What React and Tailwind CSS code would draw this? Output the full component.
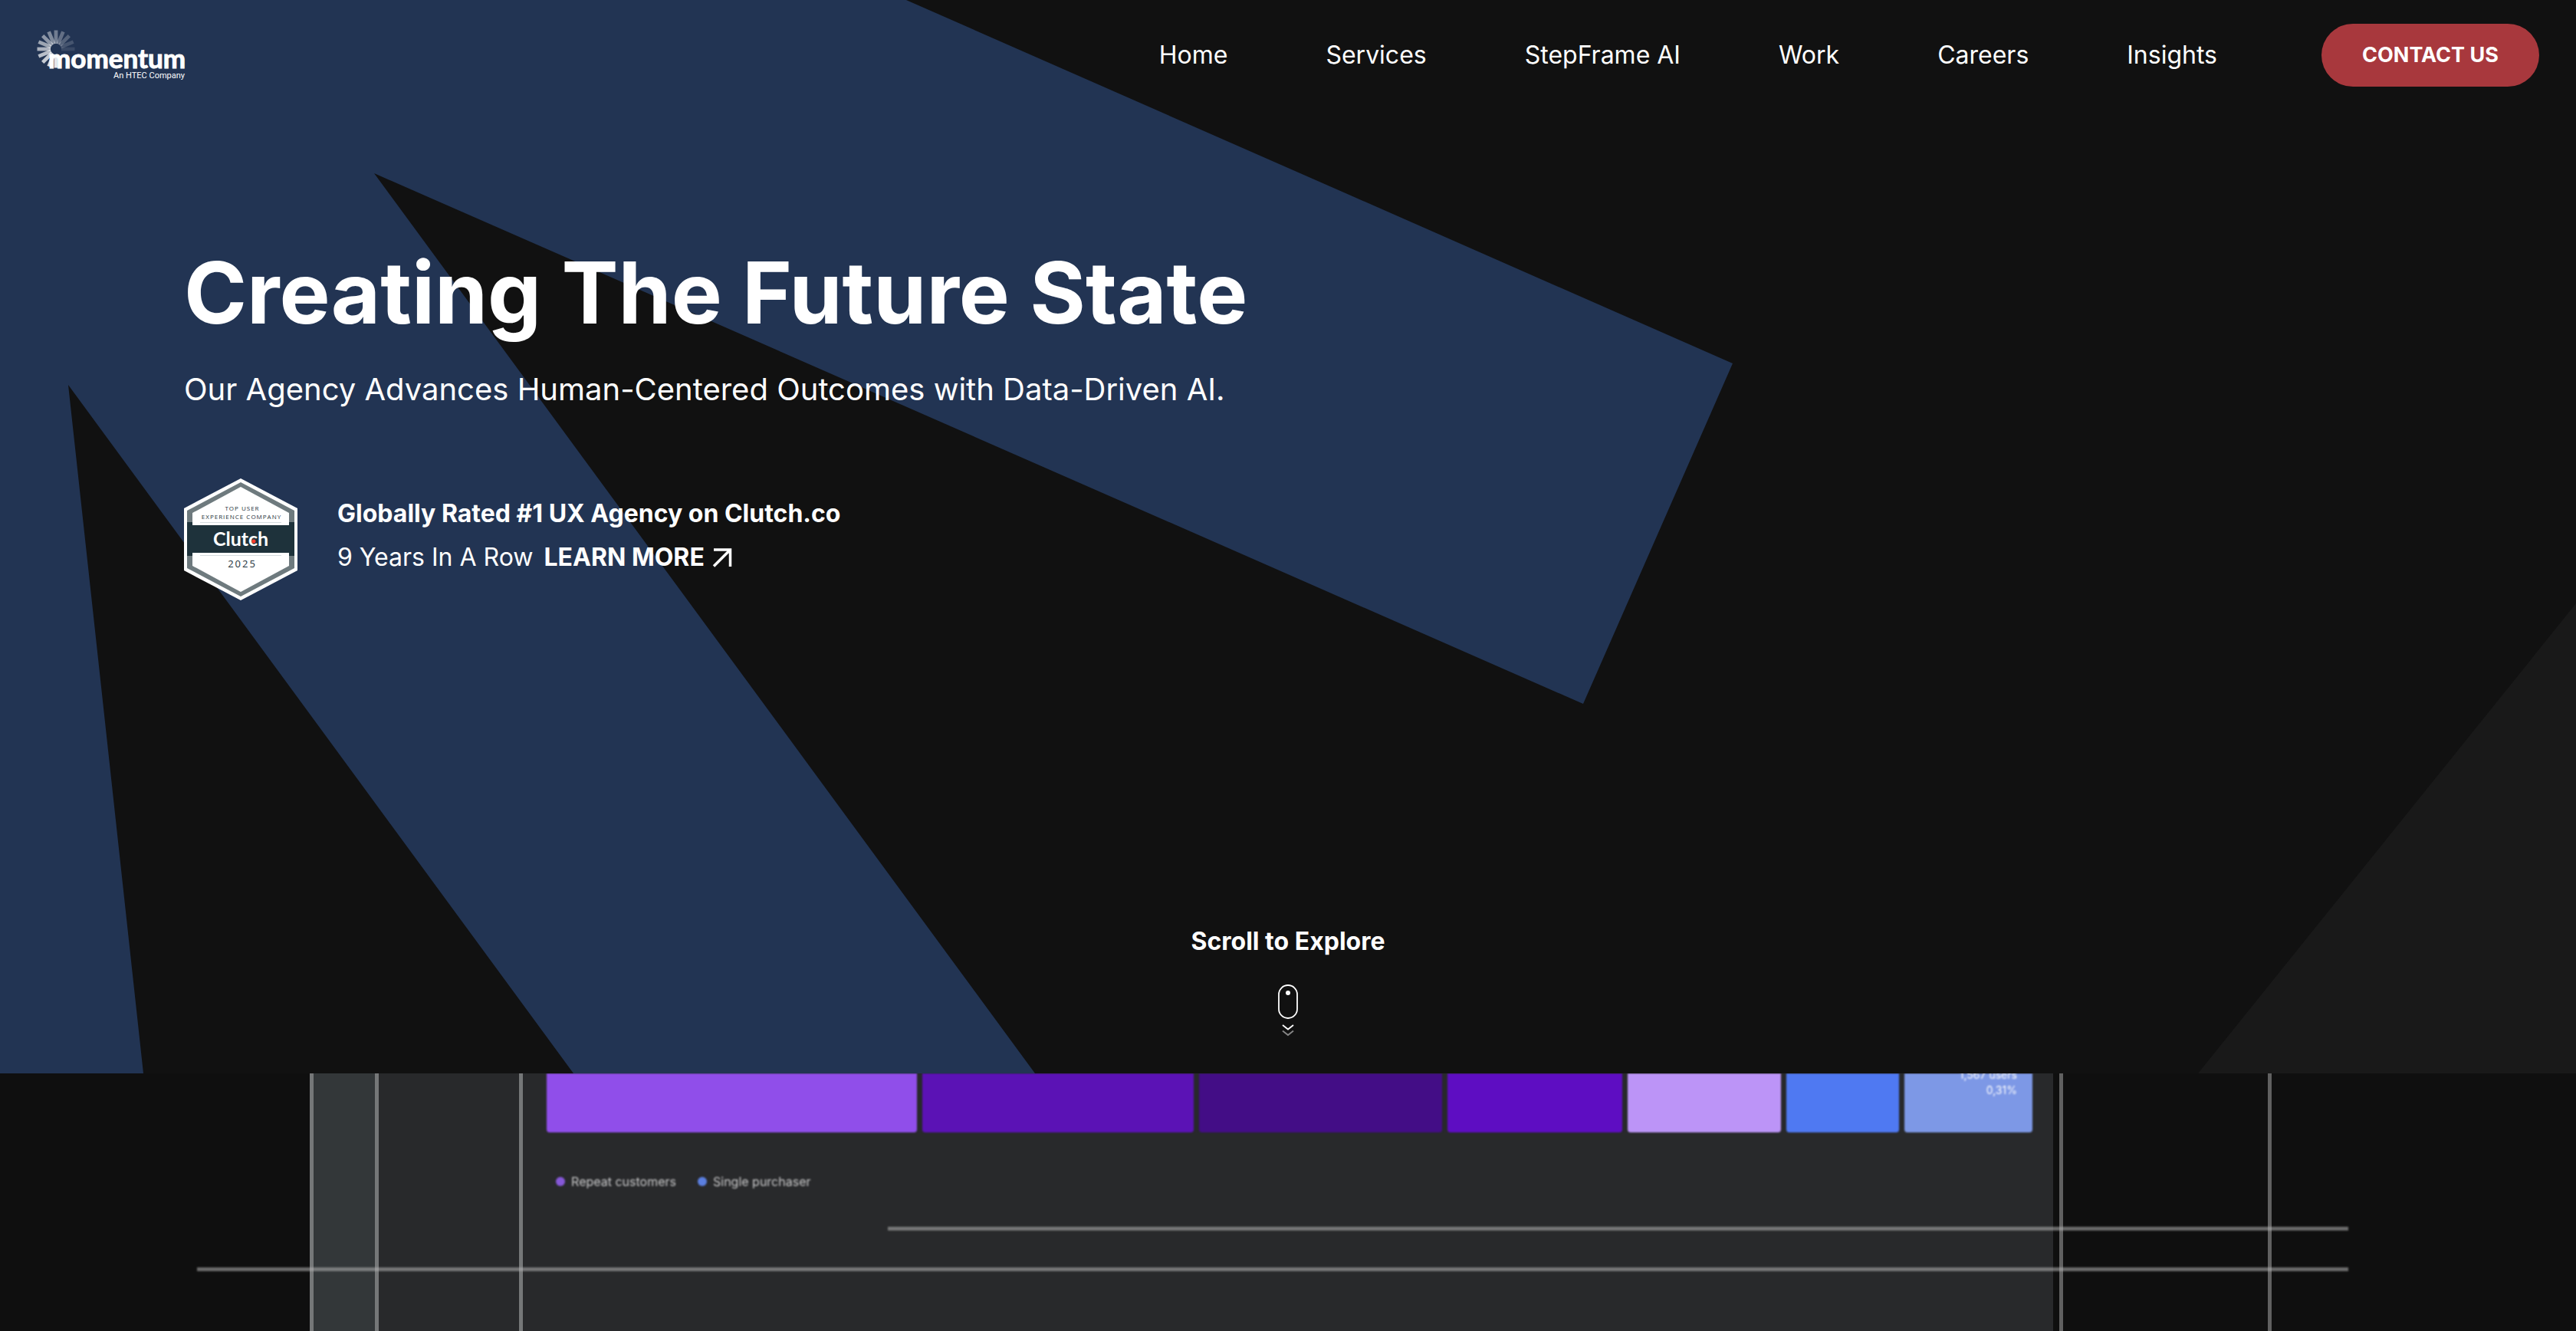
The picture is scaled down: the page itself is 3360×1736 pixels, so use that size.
const navItems = ['Home', 'Services', 'StepFrame AI', 'Work', 'Careers', 'Insights'];

const tiles = [
  { color: 'bg-[#904eea]', grow: 'grow-[483]' },
  { color: 'bg-[#5b12b5]', grow: 'grow-[354]' },
  { color: 'bg-[#430d86]', grow: 'grow-[316]' },
  { color: 'bg-[#5e0dc2]', grow: 'grow-[228]' },
  { color: 'bg-[#bc94f7]', grow: 'grow-[200]' },
  { color: 'bg-[#4f79f2]', grow: 'grow-[147]' },
  { color: 'bg-[#7d98e6]', grow: 'grow-[167]', users: '1,567 users', share: '0,31%' },
];

function Logo() {
  const rays = Array.from({ length: 13 }, (_, i) => i);
  return (
    <a href="#home" aria-label="Momentum, an HTEC Company" className="block">
      <svg width="196" height="68" viewBox="0 0 196 68" aria-hidden="true">
        {rays.map((i) => (
          <rect
            key={i}
            x="7"
            y="-2.4"
            width="17.5"
            height="4.8"
            fill="#ffffff"
            opacity={0.1 + i * 0.065}
            transform={`translate(25 26) rotate(${-i * 22.5})`}
          />
        ))}
        <text x="194" y="51" textAnchor="end" fontFamily="Lato, sans-serif" fontWeight="700" fontSize="35" fill="#ffffff" stroke="#ffffff" strokeWidth="1">momentum</text>
        <text x="193" y="64" textAnchor="end" fontFamily="Roboto, sans-serif" fontSize="11" fill="#ffffff">An HTEC Company</text>
      </svg>
    </a>
  );
}

function Badge() {
  return (
    <svg width="148" height="160" viewBox="0 0 148 160" role="img" aria-label="Clutch top user experience company 2025">
      <polygon points="74,0 148,39 148,120 74,159 0,120 0,39" fill="#ffffff" />
      <polygon points="74,5 144,42 144,117 74,154 4,117 4,42" fill="#6e7a7e" />
      <polygon points="74,11 137,45 137,114 74,148 11,114 11,45" fill="#ffffff" />
      <rect x="4" y="57" width="140" height="44" fill="#1e323b" />
      <rect x="11" y="50" width="126" height="11" fill="#ffffff" />
      <rect x="11" y="97" width="126" height="11" fill="#ffffff" />
      <path d="M21 57.500H127M21 100.500H127" stroke="#d5dcde" strokeWidth="1" />
      <g fontFamily="'Open Sans', sans-serif" fill="#1e323b" textAnchor="middle">
        <text x="76" y="42" fontSize="8" letterSpacing="1">TOP USER</text>
        <text x="75" y="53" fontSize="8" letterSpacing="1">EXPERIENCE COMPANY</text>
        <text x="76" y="116" fontSize="13" letterSpacing="2">2025</text>
      </g>
      <text x="74" y="88" textAnchor="middle" fontFamily="Lato, sans-serif" fontWeight="700" fontSize="25" fill="#ffffff">Clutch</text>
      <circle cx="91" cy="82" r="2.500" fill="#ff3d2e" />
    </svg>
  );
}

function ArrowUpRight() {
  return (
    <svg width="26" height="26" viewBox="0 0 26 26" fill="none" stroke="currentColor" strokeWidth="3.500" aria-hidden="true">
      <path d="M2 3H23.500V25M23.500 3L2 24.500" />
    </svg>
  );
}

function ScrollMouse() {
  return (
    <svg width="28" height="68" viewBox="0 0 28 68" fill="none" stroke="#ffffff" strokeWidth="1.800" aria-hidden="true">
      <rect x="2" y="1" width="24" height="43" rx="12" />
      <circle cx="14" cy="11" r="3" fill="#ffffff" stroke="none" />
      <path d="M7 53L14 58.500L21 53" />
      <path d="M7 60.500L14 66L21 60.500" opacity="0.500" />
    </svg>
  );
}

function HeroShapes() {
  return (
    <svg className="absolute inset-0 h-full w-full" viewBox="0 0 3360 1400" preserveAspectRatio="xMinYMin slice" aria-hidden="true">
      <polygon points="0,0 1182,0 2260,474 2065,918 488,226 1350,1400 748,1400 89,502 187,1400 0,1400" fill="#223453" />
      <polygon points="3360,787 3360,1400 2867,1400" fill="#191919" />
    </svg>
  );
}

function Hero() {
  return (
    <section className="relative flex min-h-[1400px] flex-col overflow-hidden">
      <HeroShapes />
      <header className="relative flex h-36 items-center justify-between px-12">
        <Logo />
        <div className="flex items-center gap-34">
          <nav aria-label="Main" className="flex items-center gap-32 text-[32px] leading-10">
            {navItems.map((item) => (
              <a key={item} href="#">{item}</a>
            ))}
          </nav>
          <a href="#contact" className="flex h-[82px] w-[284px] items-center justify-center rounded-full bg-[#a8383d] text-[27px] font-bold">CONTACT US</a>
        </div>
      </header>
      <div className="relative px-60 pt-[170px]">
        <h1 className="text-[111px] leading-[136px] font-bold">Creating The Future State</h1>
        <p className="mt-[30px] text-[40px] leading-[56px]">Our Agency Advances Human-Centered Outcomes with Data-Driven AI.</p>
        <div className="mt-[88px] flex items-center gap-[52px]">
          <Badge />
          <div className="pb-3 text-[32px] leading-[57px]">
            <p className="font-bold">Globally Rated #1 UX Agency on Clutch.co</p>
            <p className="flex items-center gap-3.5">
              9 Years In A Row
              <a href="#awards" className="flex items-center gap-2.5 font-bold">LEARN MORE <ArrowUpRight /></a>
            </p>
          </div>
        </div>
      </div>
      <div className="relative mt-auto flex flex-col items-center gap-9 pb-12">
        <p className="text-[32px] leading-10 font-bold">Scroll to Explore</p>
        <ScrollMouse />
      </div>
    </section>
  );
}

function LegendItem({ color, label }) {
  return (
    <li className="flex items-center gap-2">
      <span className={`size-3 rounded-full ${color}`} />
      {label}
    </li>
  );
}

function Showcase() {
  return (
    <section className="relative flex h-[336px] overflow-hidden bg-[#0f0f0f]">
      <div className="w-[12.02%]" />
      <div className="w-[2.68%] border-x-5 border-[#757778] bg-[#333739]" />
      <div className="w-[5.6%] border-r-5 border-[#757778] bg-[#28292b]" />
      <div className="w-[59.4%] bg-[#28292b] pr-[27px] pl-[31px]">
        <div className="flex h-[77px] gap-[7px]">
          {tiles.map((t) => (
            <div key={t.color} className={`basis-0 rounded-b-sm blur-[1px] ${t.color} ${t.grow}`}>
              {t.users && (
                <p className="-mt-2 pr-5 text-right text-[14px] leading-[20px] text-white">{t.users}<br />{t.share}</p>
              )}
            </div>
          ))}
        </div>
        <ul className="mt-[54px] ml-3 flex gap-7 text-[16px] leading-[20px] text-[#c8c8c9] blur-[1px]">
          <LegendItem color="bg-[#8658d8]" label="Repeat customers" />
          <LegendItem color="bg-[#5b7fe0]" label="Single purchaser" />
        </ul>
      </div>
      <div className="ml-2 w-[8.25%] border-x-5 border-[#606060]" />
      <div className="absolute top-[200px] right-[8.85%] left-[34.45%] h-[5px] bg-[#b4b4b4]/55 blur-[1px]" />
      <div className="absolute top-[253px] right-[8.85%] left-[7.65%] h-[5px] bg-[#b4b4b4]/55 blur-[1px]" />
    </section>
  );
}

export default function App() {
  return (
    <main className="bg-[#111111] font-['Inter',sans-serif] text-white">
      <Hero />
      <Showcase />
    </main>
  );
}
